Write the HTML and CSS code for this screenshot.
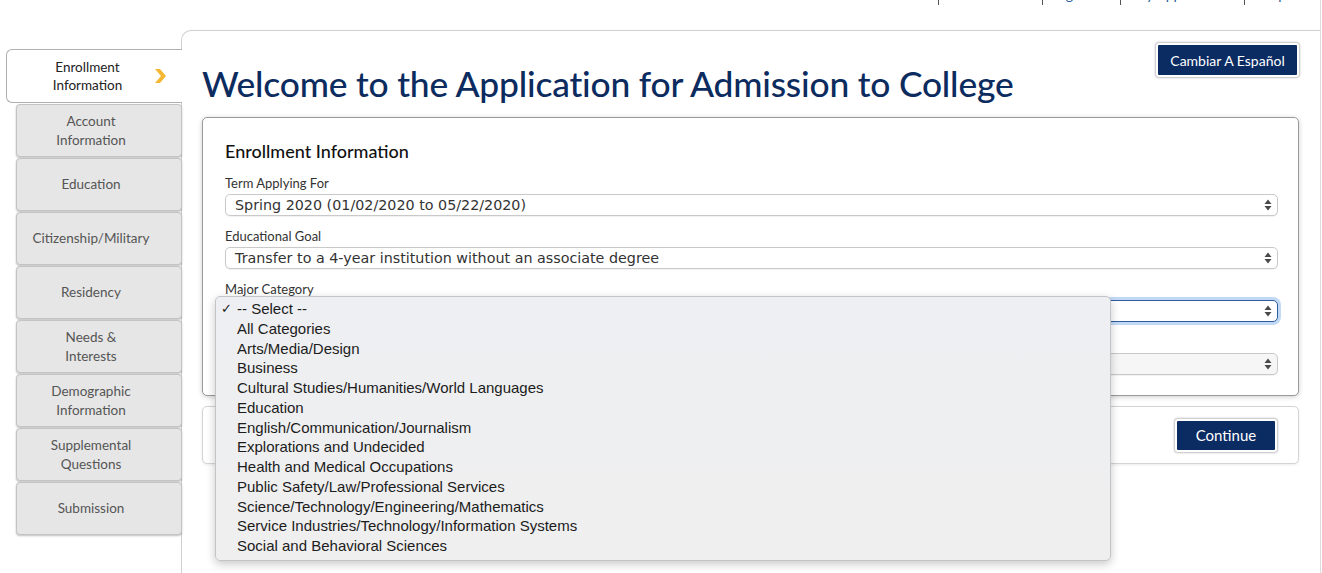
FILE: index.html
```html
<!DOCTYPE html>
<html lang="en">
<head>
<meta charset="utf-8">
<title>Application for Admission to College</title>
<link rel="stylesheet" href="styles.css">
</head>
<body>
<div class="page">
  <nav class="topnav">
    <a class="navlink">Home</a>
    <a class="navlink">Account Info</a>
    <a class="navlink">Sign Out</a>
    <a class="navlink">My Applications</a>
    <a class="navlink last">Help</a>
  </nav>
  <div class="layout">
    <aside class="sidebar">
      <div class="tab active">
        <span class="tab-label">Enrollment<br>Information</span>
        <svg class="chevron" width="16" height="16" viewBox="0 0 16 16"><path d="M3 1 L8 1 L14 8 L8 15 L3 15 L9 8 Z" fill="#f6b733"/></svg>
      </div>
      <div class="tab">Account<br>Information</div>
      <div class="tab">Education</div>
      <div class="tab">Citizenship/Military</div>
      <div class="tab">Residency</div>
      <div class="tab">Needs &amp;<br>Interests</div>
      <div class="tab">Demographic<br>Information</div>
      <div class="tab">Supplemental<br>Questions</div>
      <div class="tab">Submission</div>
    </aside>
    <main class="main">
      <div class="header">
        <h1 class="title">Welcome to the Application for Admission to College</h1>
        <button class="btn btn-lang">Cambiar A Español</button>
      </div>
      <section class="card">
        <h2 class="card-title">Enrollment Information</h2>
        <div class="field">
          <div class="label">Term Applying For</div>
          <div class="select"><span class="select-text">Spring 2020 (01/02/2020 to 05/22/2020)</span><svg class="arrows" width="8" height="12" viewBox="0 0 8 12"><path d="M4 0.5 L7.5 5 L0.5 5 Z M4 11.5 L7.5 7 L0.5 7 Z" fill="#4a4a4a"/></svg></div>
        </div>
        <div class="field">
          <div class="label">Educational Goal</div>
          <div class="select"><span class="select-text">Transfer to a 4-year institution without an associate degree</span><svg class="arrows" width="8" height="12" viewBox="0 0 8 12"><path d="M4 0.5 L7.5 5 L0.5 5 Z M4 11.5 L7.5 7 L0.5 7 Z" fill="#4a4a4a"/></svg></div>
        </div>
        <div class="field">
          <div class="label">Major Category</div>
          <div class="select-wrap">
            <div class="select focus"><span class="select-text">-- Select --</span><svg class="arrows" width="8" height="12" viewBox="0 0 8 12"><path d="M4 0.5 L7.5 5 L0.5 5 Z M4 11.5 L7.5 7 L0.5 7 Z" fill="#4a4a4a"/></svg></div>
            <ul class="dropdown">
              <li class="opt checked"><span class="check">✓</span>-- Select --</li>
              <li class="opt">All Categories</li>
              <li class="opt">Arts/Media/Design</li>
              <li class="opt">Business</li>
              <li class="opt">Cultural Studies/Humanities/World Languages</li>
              <li class="opt">Education</li>
              <li class="opt">English/Communication/Journalism</li>
              <li class="opt">Explorations and Undecided</li>
              <li class="opt">Health and Medical Occupations</li>
              <li class="opt">Public Safety/Law/Professional Services</li>
              <li class="opt">Science/Technology/Engineering/Mathematics</li>
              <li class="opt">Service Industries/Technology/Information Systems</li>
              <li class="opt">Social and Behavioral Sciences</li>
            </ul>
          </div>
        </div>
        <div class="field">
          <div class="label">Major</div>
          <div class="select disabled"><span class="select-text"></span><svg class="arrows" width="8" height="12" viewBox="0 0 8 12"><path d="M4 0.5 L7.5 5 L0.5 5 Z M4 11.5 L7.5 7 L0.5 7 Z" fill="#4a4a4a"/></svg></div>
        </div>
      </section>
      <section class="card actions">
        <button class="btn btn-continue">Continue</button>
      </section>
    </main>
  </div>
</div>
</body>
</html>
```

FILE: styles.css
```css
* { box-sizing: border-box; }
html, body { margin: 0; padding: 0; background: #fff; }
body {
  font-family: Lato, "Open Sans", "Liberation Sans", sans-serif;
  color: #222;
  width: 1322px;
  height: 573px;
  overflow: hidden;
}
.page {
  width: 1321px;
  height: 573px;
  border-right: 1px solid #dcdcdc;
}
.topnav {
  height: 5px;
  overflow: hidden;
  display: flex;
  justify-content: flex-end;
  padding-right: 22px;
}
.navlink {
  display: block;
  font-size: 14px;
  line-height: 16px;
  margin-top: -13px;
  color: #2a5a9a;
  padding: 0 12px;
  border-right: 1px solid #555;
  height: 18px;
}
.navlink.last { border-right: none; }
.layout {
  display: flex;
  margin-top: 25px;
}
.sidebar {
  width: 182px;
  flex: none;
  padding-top: 19px;
  display: flex;
  flex-direction: column;
  align-items: flex-end;
  position: relative;
  z-index: 2;
  margin-right: -1px;
}
.tab {
  width: 166px;
  height: 53px;
  margin-bottom: 1px;
  background: #e6e6e6;
  border: 1px solid #c4c4c4;
  border-radius: 4px;
  box-shadow: 0 1px 2px rgba(0,0,0,0.25);
  display: flex;
  align-items: center;
  justify-content: center;
  text-align: center;
  font-size: 13.5px;
  line-height: 18.5px;
  color: #555;
  padding-right: 16px;
}
.tab.active {
  width: 176px;
  height: 54px;
  background: #fff;
  border: 1px solid #b0b0b0;
  border-right: none;
  border-radius: 6px 0 0 6px;
  box-shadow: none;
  color: #222;
  position: relative;
  padding-right: 14px;
}
.chevron {
  position: absolute;
  right: 14px;
  top: 18px;
}
.main {
  flex: 1;
  height: 560px;
  border-top: 1px solid #cfcfcf;
  border-left: 1px solid #cfcfcf;
  border-top-left-radius: 10px;
  padding: 12px 21px 0 20px;
}
.header {
  display: flex;
  justify-content: space-between;
  align-items: flex-start;
}
.title {
  margin: 20px 0 0 0;
  font-size: 35.4px;
  line-height: 42px;
  font-weight: 500;
  color: #0c2b5e;
  letter-spacing: -0.2px;
  height: 44px;
}
.btn {
  font-family: Lato, "Open Sans", "Liberation Sans", sans-serif;
  background: #0b2b63;
  color: #fff;
  border: 2px solid #fff;
  box-shadow: 0 0 2px 1px rgba(0,0,0,0.25);
  border-radius: 3px;
  cursor: pointer;
}
.btn-lang {
  width: 143px;
  height: 34px;
  font-size: 14px;
  padding: 0;
}
.card {
  margin-top: 10px;
  border: 1px solid #9a9a9a;
  border-radius: 5px;
  box-shadow: 0 1px 5px rgba(0,0,0,0.2);
  padding: 22px 20px 20px 22px;
  background: #fff;
}
.card-title {
  margin: 0 0 13px 0;
  font-size: 18px;
  line-height: 22px;
  font-weight: 500;
  color: #111;
}
.field + .field { margin-top: 12px; }
.label {
  font-size: 13px;
  line-height: 16px;
  color: #333;
  margin-bottom: 3px;
}
.select-wrap { position: relative; }
.select {
  height: 22px;
  border: 1px solid #c9c9c9;
  border-radius: 5px;
  background: #fff;
  box-shadow: 0 1px 1px rgba(0,0,0,0.06);
  display: flex;
  align-items: center;
  justify-content: space-between;
  padding: 0 5px 0 9px;
}
.select-text {
  font-family: "DejaVu Sans", Verdana, sans-serif;
  font-size: 14.3px;
  color: #333;
  white-space: nowrap;
}
.select.focus {
  border-color: #2f5c9c;
  box-shadow: 0 0 0 3px rgba(120,170,235,0.45);
}
.select.disabled { background: #f6f6f6; }
.arrows { flex: none; }
.dropdown {
  position: absolute;
  left: -10px;
  top: -4px;
  width: 896px;
  height: 265px;
  margin: 0;
  padding: 2px 0 0 21px;
  list-style: none;
  background: linear-gradient(#eeeff2, #efefef);
  border: 1px solid #c2c4c8;
  border-radius: 5px;
  box-shadow: 0 3px 10px rgba(0,0,0,0.22);
  z-index: 5;
}
.opt {
  font-family: "Liberation Sans", Arial, sans-serif;
  font-size: 15px;
  line-height: 19.75px;
  color: #1c1c1c;
  position: relative;
  white-space: nowrap;
}
.check {
  position: absolute;
  left: -16px;
  font-family: "DejaVu Sans", sans-serif;
  font-size: 13px;
  font-weight: bold;
}
.actions {
  margin-top: 10px;
  border-color: #d4d4d4;
  box-shadow: 0 1px 3px rgba(0,0,0,0.08);
  height: 58px;
  padding: 0 21px 0 0;
  display: flex;
  justify-content: flex-end;
  align-items: center;
}
.btn-continue {
  width: 102px;
  height: 33px;
  font-size: 15px;
  padding: 0;
}
```
